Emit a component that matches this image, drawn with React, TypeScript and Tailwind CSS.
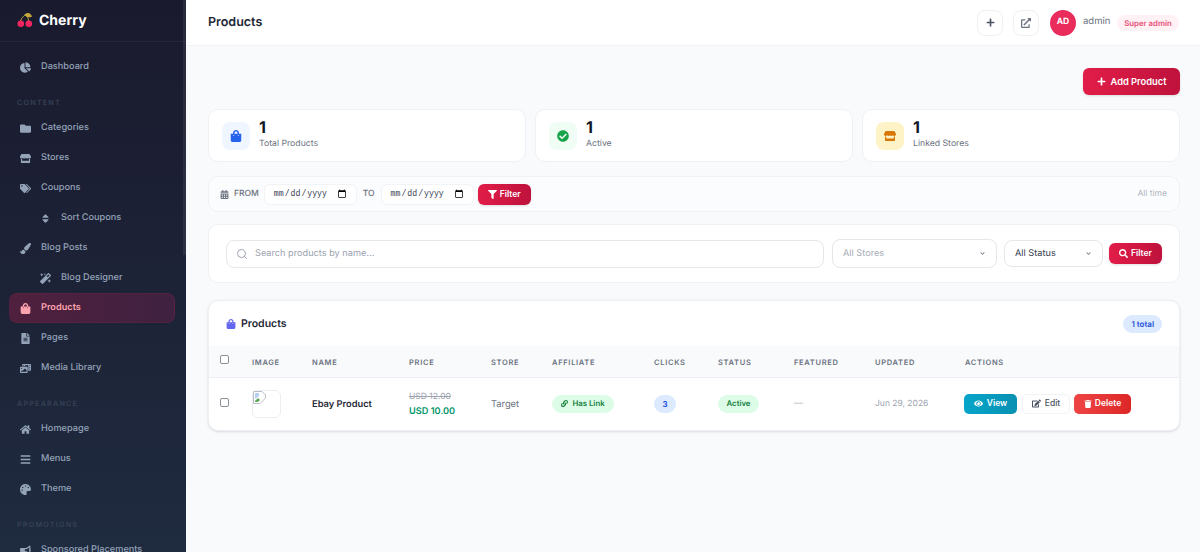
import type { ReactNode } from 'react';
import { Search } from 'lucide-react';
import {
    FaBars,
    FaBullhorn,
    FaCalendarAlt,
    FaChartPie,
    FaCheckCircle,
    FaChevronDown,
    FaEdit,
    FaExternalLinkAlt,
    FaEye,
    FaFileAlt,
    FaFilter,
    FaFolder,
    FaHome,
    FaLink,
    FaMagic,
    FaPaintBrush,
    FaPalette,
    FaPhotoVideo,
    FaPlus,
    FaSearch,
    FaShoppingBag,
    FaSort,
    FaStore,
    FaTags,
    FaTrash,
} from 'react-icons/fa';

function NavItem({ icon, label, sub, active }: { icon: ReactNode; label: string; sub?: boolean; active?: boolean }) {
    return (
        <div
            className={`flex h-[30px] shrink-0 items-center rounded-lg text-[9.2px] font-medium ${sub ? 'pl-[30px]' : active ? 'pl-[9px]' : 'pl-[10px]'} ${active ? 'border border-[#6b2342]/40 bg-gradient-to-r from-[#50203e] to-[#3f2140] font-semibold text-[#fda4af]' : 'text-[#94a3b8]'}`}
        >
            <span className="flex w-[22px] items-center pl-[1px] text-[11px]">{icon}</span>
            <span>{label}</span>
        </div>
    );
}

function SectionLabel({ children }: { children: ReactNode }) {
    return <div className="mt-[15px] mb-[4px] h-[12px] pl-[8px] text-[7.2px] leading-[12px] font-semibold tracking-[1.2px] text-[#364256]">{children}</div>;
}

function Sidebar() {
    return (
        <aside className="relative flex h-[552px] w-[186px] shrink-0 flex-col overflow-hidden bg-gradient-to-b from-[#1a1a2e] to-[#1f2b3f]">
            <div className="flex h-[42px] shrink-0 items-center gap-[5px] border-b border-white/5 pl-[17px]">
                <svg width="17" height="17" viewBox="0 0 17 17">
                    <path d="M3.5 9 C4.5 6 6.5 4 8.5 2.5 M11.5 9 C11.5 6 10 4 8.5 2.5" fill="none" stroke="#b5a63a" strokeWidth="1" />
                    <path d="M7.5 3 C9.5 0 13.5 0.5 15 4.5 C12.5 6 9.5 5.5 7.5 3 Z" fill="#c2a83a" />
                    <circle cx="3.8" cy="11.8" r="3.3" fill="#f0245f" />
                    <circle cx="11.8" cy="11.8" r="3.3" fill="#f0245f" />
                </svg>
                <span className="text-[14px] font-bold text-white">Cherry</span>
            </div>
            <nav className="flex flex-col pt-[10px] pr-[11px] pl-[9px]">
                <NavItem icon={<FaChartPie />} label="Dashboard" />
                <SectionLabel>CONTENT</SectionLabel>
                <NavItem icon={<FaFolder />} label="Categories" />
                <NavItem icon={<FaStore />} label="Stores" />
                <NavItem icon={<FaTags />} label="Coupons" />
                <NavItem icon={<FaSort />} label="Sort Coupons" sub />
                <NavItem icon={<FaPaintBrush />} label="Blog Posts" />
                <NavItem icon={<FaMagic />} label="Blog Designer" sub />
                <NavItem icon={<FaShoppingBag />} label="Products" active />
                <NavItem icon={<FaFileAlt />} label="Pages" />
                <NavItem icon={<FaPhotoVideo />} label="Media Library" />
                <SectionLabel>APPEARANCE</SectionLabel>
                <NavItem icon={<FaHome />} label="Homepage" />
                <NavItem icon={<FaBars />} label="Menus" />
                <NavItem icon={<FaPalette />} label="Theme" />
                <SectionLabel>PROMOTIONS</SectionLabel>
                <NavItem icon={<FaBullhorn />} label="Sponsored Placements" />
            </nav>
            <div className="absolute top-0 right-0 h-[255px] w-[3px] bg-white/[0.07]" />
        </aside>
    );
}

function StatCard({ icon, tint, label }: { icon: ReactNode; tint: string; label: string }) {
    return (
        <div className="flex h-[53px] items-center gap-[9px] rounded-[10px] border border-[#eef1f5] bg-white pb-[2px] pl-[13px]">
            <div className={`mt-[2px] flex h-[28px] w-[28px] items-center justify-center rounded-lg text-[12px] ${tint}`}>{icon}</div>
            <div className="flex flex-col">
                <span className="text-[16px] leading-[19px] font-bold text-[#111827]">1</span>
                <span className="pt-[1px] text-[8.7px] leading-[13px] text-[#6b7280]">{label}</span>
            </div>
        </div>
    );
}

function DateField() {
    return (
        <input
            type="date"
            className="h-[21px] w-[93px] rounded-md border border-[#f1f3f6] bg-white pr-[9px] pl-[8px] font-['Liberation_Mono',monospace] text-[8.2px] text-[#374151] [&::-webkit-calendar-picker-indicator]:m-0 [&::-webkit-calendar-picker-indicator]:h-[10px] [&::-webkit-calendar-picker-indicator]:w-[10px] [&::-webkit-calendar-picker-indicator]:p-0"
        />
    );
}

function BrokenImage() {
    return (
        <div className="h-[28px] w-[29px] rounded-md border border-[#eceef2] bg-white">
            <svg width="13" height="13" viewBox="0 0 13 13">
                <path d="M0.5 0.5 H9 L12.5 4 V7 L7 12.5 H0.5 Z" fill="#fff" stroke="#b8bcc4" strokeWidth="1" />
                <path d="M2 2 H6 V5 L2 8 Z" fill="#b7cdf2" />
                <path d="M2 10 L5 7 L7 9 L5 11 H2 Z" fill="#5fa85a" />
            </svg>
        </div>
    );
}

function RedButton({ children, className }: { children: ReactNode; className: string }) {
    return (
        <button className={`flex items-center justify-center rounded-md bg-gradient-to-r from-[#e11d48] to-[#be123c] font-semibold text-white shadow-sm ${className}`}>
            {children}
        </button>
    );
}

const headers = ['IMAGE', 'NAME', 'PRICE', 'STORE', 'AFFILIATE', 'CLICKS', 'STATUS', 'FEATURED', 'UPDATED', 'ACTIONS'];

function ProductsTable() {
    return (
        <div className="overflow-hidden rounded-[10px] border border-[#eceff3] bg-white shadow-sm">
            <div className="flex h-[45px] items-center justify-between pr-[17px] pl-[17px]">
                <div className="flex items-center gap-[5px] text-[10.5px] font-semibold text-[#1f2937]">
                    <FaShoppingBag className="text-[10px] text-[#6366f1]" />
                    Products
                </div>
                <span className="rounded-full bg-[#dbeafe] px-[8px] py-[3px] text-[8px] leading-[12px] font-semibold text-[#1d4ed8]">1 total</span>
            </div>
            <table className="w-full table-fixed border-collapse">
                <colgroup>
                    <col className="w-[31px]" />
                    <col className="w-[60px]" />
                    <col className="w-[97px]" />
                    <col className="w-[82px]" />
                    <col className="w-[61px]" />
                    <col className="w-[102px]" />
                    <col className="w-[64px]" />
                    <col className="w-[76px]" />
                    <col className="w-[81px]" />
                    <col className="w-[90px]" />
                    <col />
                </colgroup>
                <thead>
                    <tr className="h-[31px] border-b border-[#eceff3] bg-[#f8fafc]">
                        <th className="pl-[11px] text-left">
                            <input type="checkbox" className="mb-[3px] block h-[9px] w-[9px] appearance-none rounded-[2px] border border-[#8a8f98] bg-white" />
                        </th>
                        {headers.map((h) => (
                            <th key={h} className="pt-[2px] pl-[12px] text-left text-[7.5px] font-semibold tracking-[0.7px] text-[#6b7280]">
                                {h}
                            </th>
                        ))}
                    </tr>
                </thead>
                <tbody>
                    <tr className="h-[53px]">
                        <td className="pl-[11px]">
                            <input type="checkbox" className="mb-[3px] block h-[9px] w-[9px] appearance-none rounded-[2px] border border-[#8a8f98] bg-white" />
                        </td>
                        <td className="pl-[12px]"><BrokenImage /></td>
                        <td className="pt-[2px] pl-[12px] text-[9.3px] font-semibold text-[#1f2937]">Ebay Product</td>
                        <td className="pt-[2px] pl-[12px]">
                            <div className="text-[8.5px] leading-[14px] text-[#9ca3af] line-through">USD 12.00</div>
                            <div className="text-[9.2px] leading-[15px] font-semibold text-[#059669]">USD 10.00</div>
                        </td>
                        <td className="pt-[2px] pl-[12px] text-[9.3px] text-[#6b7280]">Target</td>
                        <td className="pl-[12px]">
                            <span className="flex h-[18px] w-[62px] items-center justify-center gap-[4px] rounded-full bg-[#dcfce7] text-[7.8px] font-semibold text-[#15803d]">
                                <FaLink className="text-[7px]" />
                                Has Link
                            </span>
                        </td>
                        <td className="pl-[12px]">
                            <span className="flex h-[18px] w-[22px] items-center justify-center rounded-full bg-[#dbeafe] text-[8px] font-semibold text-[#1d4ed8]">3</span>
                        </td>
                        <td className="pl-[12px]">
                            <span className="flex h-[18px] w-[41px] items-center justify-center rounded-full bg-[#dcfce7] text-[7.8px] font-semibold text-[#15803d]">Active</span>
                        </td>
                        <td className="pl-[12px] text-[9px] text-[#b6bcc6]">—</td>
                        <td className="pt-[1px] pl-[12px] text-[8.5px] text-[#9ca3af]">Jun 29, 2026</td>
                        <td className="pl-[11px]">
                            <div className="flex items-center gap-[4px]">
                                <button className="flex h-[20px] w-[53px] items-center justify-center gap-[4px] rounded-[5px] bg-gradient-to-r from-[#06a5c9] to-[#0891b2] text-[8.5px] font-semibold text-white">
                                    <FaEye className="text-[9px]" />
                                    View
                                </button>
                                <button className="ml-[1px] flex h-[20px] w-[48px] items-center justify-center gap-[4px] rounded-[5px] border border-[#f1f3f6] bg-white text-[8.5px] font-medium text-[#4b5563]">
                                    <FaEdit className="text-[9px]" />
                                    Edit
                                </button>
                                <button className="flex h-[20px] w-[57px] items-center justify-center gap-[3px] rounded-[5px] bg-gradient-to-r from-[#ef4444] to-[#dc2626] text-[8.5px] font-semibold text-white">
                                    <FaTrash className="text-[8px]" />
                                    Delete
                                </button>
                            </div>
                        </td>
                    </tr>
                </tbody>
            </table>
        </div>
    );
}

export default function App() {
    return (
        <div className="flex h-[552px] w-[1200px] overflow-hidden bg-[#f8fafc] font-['Inter',sans-serif] [text-rendering:geometricPrecision]">
            <Sidebar />
            <main className="flex min-w-0 flex-1 flex-col">
                <header className="flex h-[46px] shrink-0 items-center justify-between border-b border-[#f1f3f6] bg-white pr-[21px] pl-[22px]">
                    <h1 className="pt-[1px] text-[12.5px] font-semibold text-[#1f2937]">Products</h1>
                    <div className="flex items-center">
                        <button className="flex h-[26px] w-[26px] items-center justify-center rounded-lg border border-[#eef0f4] text-[9px] text-[#4b5563]">
                            <FaPlus />
                        </button>
                        <button className="ml-[10px] flex h-[26px] w-[26px] items-center justify-center rounded-lg border border-[#eef0f4] text-[10px] text-[#6b7280]">
                            <FaExternalLinkAlt />
                        </button>
                        <div className="ml-[11px] flex h-[26px] w-[26px] items-center justify-center rounded-full bg-[#e92c5c] text-[8.5px] font-bold text-white">AD</div>
                        <span className="ml-[7px] w-[27px] text-[9.5px] text-[#6b7280]">admin</span>
                        <span className="ml-[7px] w-[62px] rounded-full bg-[#fff1f4] py-[3px] text-center text-[7.8px] leading-[10px] font-semibold text-[#e8527a]">Super admin</span>
                    </div>
                </header>
                <div className="flex flex-col px-[22px] pr-[20px]">
                    <div className="mt-[22px] flex justify-end">
                        <RedButton className="h-[27px] w-[97px] gap-[5px] text-[9.3px]">
                            <FaPlus className="text-[9px]" />
                            Add Product
                        </RedButton>
                    </div>
                    <div className="mt-[14px] grid grid-cols-3 gap-[9px]">
                        <StatCard icon={<FaShoppingBag className="text-[#2563eb]" />} tint="bg-[#eff6ff]" label="Total Products" />
                        <StatCard icon={<FaCheckCircle className="text-[#16a34a]" />} tint="bg-[#f0fdf4]" label="Active" />
                        <StatCard icon={<FaStore className="text-[#d97706]" />} tint="bg-[#fef3c7]" label="Linked Stores" />
                    </div>
                    <div className="mt-[14px] flex h-[36px] items-center rounded-[10px] border border-[#f0f2f6] bg-[#fbfcfd] pr-[12px] pl-[11px]">
                        <FaCalendarAlt className="text-[9px] text-[#6b7280]" />
                        <span className="ml-[5px] pt-[1px] text-[8.5px] font-medium text-[#6b7280]">FROM</span>
                        <span className="ml-[5px] flex"><DateField /></span>
                        <span className="ml-[6px] pt-[1px] text-[8.5px] font-medium text-[#6b7280]">TO</span>
                        <span className="ml-[6px] flex"><DateField /></span>
                        <RedButton className="ml-[4px] h-[21px] w-[53px] gap-[3px] text-[8.5px]">
                            <FaFilter className="text-[9px]" />
                            Filter
                        </RedButton>
                        <span className="ml-auto text-[8.5px] text-[#b0b6c0]">All time</span>
                    </div>
                    <div className="mt-[12px] flex h-[59px] items-center rounded-[10px] border border-[#eef1f5] bg-white pr-[17px] pl-[17px]">
                        <div className="flex h-[28px] w-[598px] items-center rounded-lg border border-[#e5e7eb] pl-[9px]">
                            <Search className="h-[12px] w-[12px] text-[#9ca3af]" strokeWidth={2} />
                            <span className="ml-[7px] text-[9.2px] text-[#9ca3af]">Search products by name...</span>
                        </div>
                        <div className="ml-[8px] flex h-[29px] w-[165px] items-center justify-between rounded-lg border border-[#e5e7eb] pr-[11px] pl-[10px] text-[9.2px] text-[#a8adb6]">
                            All Stores
                            <FaChevronDown className="text-[5px] text-[#6b7280]" />
                        </div>
                        <div className="ml-[7px] flex h-[27px] w-[99px] items-center justify-between rounded-lg border border-[#e5e7eb] pr-[11px] pl-[10px] text-[9.2px] text-[#374151]">
                            All Status
                            <FaChevronDown className="text-[5px] text-[#6b7280]" />
                        </div>
                        <RedButton className="ml-[6px] h-[21px] w-[53px] gap-[3px] text-[8.5px]">
                            <FaSearch className="text-[9px]" />
                            Filter
                        </RedButton>
                    </div>
                    <div className="mt-[17px]">
                        <ProductsTable />
                    </div>
                </div>
            </main>
        </div>
    );
}
